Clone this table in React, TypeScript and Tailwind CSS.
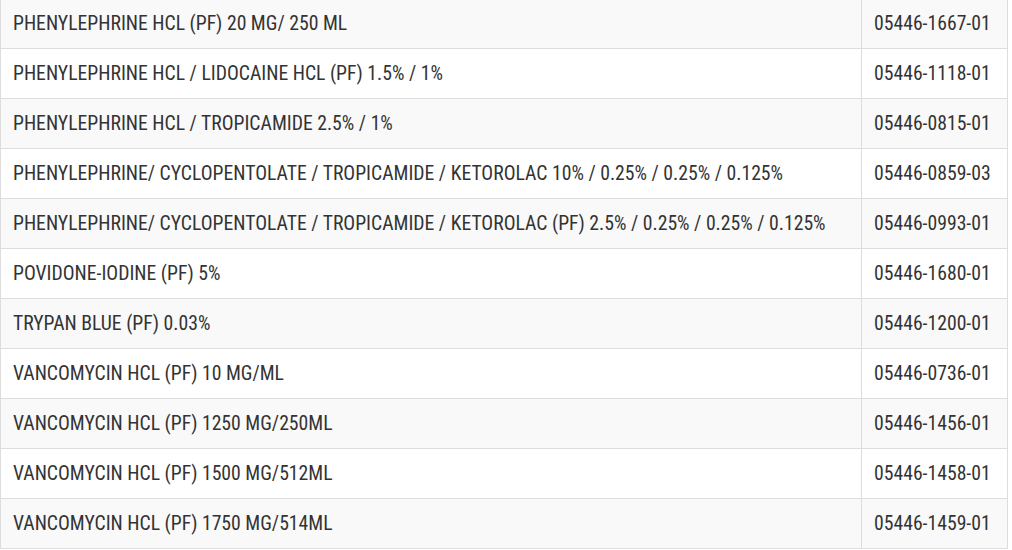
const rows: [string, string][] = [
  ["PHENYLEPHRINE HCL (PF) 20 MG/ 250 ML", "05446-1667-01"],
  ["PHENYLEPHRINE HCL / LIDOCAINE HCL (PF) 1.5% / 1%", "05446-1118-01"],
  ["PHENYLEPHRINE HCL / TROPICAMIDE 2.5% / 1%", "05446-0815-01"],
  ["PHENYLEPHRINE/ CYCLOPENTOLATE / TROPICAMIDE / KETOROLAC 10% / 0.25% / 0.25% / 0.125%", "05446-0859-03"],
  ["PHENYLEPHRINE/ CYCLOPENTOLATE / TROPICAMIDE / KETOROLAC (PF) 2.5% / 0.25% / 0.25% / 0.125%", "05446-0993-01"],
  ["POVIDONE-IODINE (PF) 5%", "05446-1680-01"],
  ["TRYPAN BLUE (PF) 0.03%", "05446-1200-01"],
  ["VANCOMYCIN HCL (PF) 10 MG/ML", "05446-0736-01"],
  ["VANCOMYCIN HCL (PF) 1250 MG/250ML", "05446-1456-01"],
  ["VANCOMYCIN HCL (PF) 1500 MG/512ML", "05446-1458-01"],
  ["VANCOMYCIN HCL (PF) 1750 MG/514ML", "05446-1459-01"],
];

export default function App() {
  return (
    <div className="w-[1012px] h-[550px] overflow-hidden bg-white">
      <table
        className="w-[1008px] -mt-[2px] border-collapse text-[19.7px] text-[#333] [font-stretch:condensed]"
        style={{ fontFamily: "Roboto, 'Liberation Sans', sans-serif" }}
      >
        <tbody>
          {rows.map(([name, code], i) => (
            <tr key={code} className={i % 2 === 0 ? "bg-[#f9f9f9]" : "bg-white"}>
              <td className="h-[50px] border border-[#dddddd] px-3 align-middle">{name}</td>
              <td className="w-[146px] h-[50px] border border-[#dddddd] px-3 align-middle">{code}</td>
            </tr>
          ))}
        </tbody>
      </table>
    </div>
  );
}
